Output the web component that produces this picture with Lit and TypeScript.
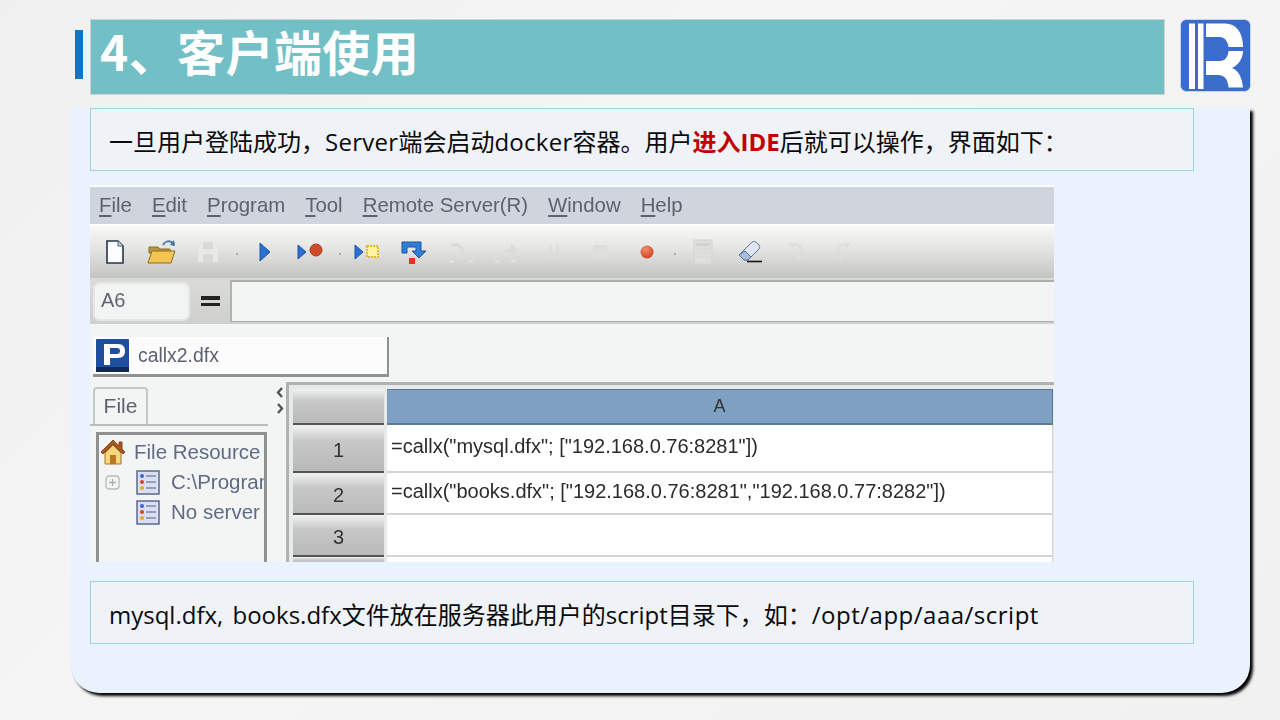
import { LitElement, html, css, svg } from "lit";
import { customElement } from "lit/decorators.js";

const icons = {
  doc: svg`<svg width="24" height="26" viewBox="0 0 24 26"><path d="M4 2h11l5 5v17H4z" fill="#fdfdfd" stroke="#26344a" stroke-width="1.6"/><path d="M15 2v5h5" fill="#cfd6e2" stroke="#4b5a70"/></svg>`,
  open: svg`<svg width="30" height="26" viewBox="0 0 30 26"><path d="M2 8h9l2 2h10v4H2z" fill="#b89740" stroke="#8a6d20"/><path d="M1 24l4-12h23l-4 12z" fill="#f4c552" stroke="#8a6d20"/><path d="M16 6c2-4 6-5 10-2" fill="none" stroke="#4f7ea8" stroke-width="2"/><path d="M27 1l1 6-5-1z" fill="#3c6f9e"/></svg>`,
  save: svg`<svg width="24" height="26" viewBox="0 0 24 26"><path d="M2 3h20v20H2z" fill="#e8e9e7"/><path d="M7 3h10v7H7zM7 15h10v8H7z" fill="#d8d9d7"/></svg>`,
  play: svg`<svg width="14" height="22" viewBox="0 0 14 22"><path d="M2 2l10 9-10 9z" fill="#2d6fd0" stroke="#1f56a8"/></svg>`,
  playRec: svg`<svg width="28" height="18" viewBox="0 0 28 18"><path d="M1 2l8 7-8 7z" fill="#2d6fd0" stroke="#1f56a8"/><circle cx="19" cy="7" r="6" fill="#cf4a2c" stroke="#a8391f"/></svg>`,
  playStar: svg`<svg width="28" height="18" viewBox="0 0 28 18"><path d="M1 2l8 7-8 7z" fill="#2d6fd0" stroke="#1f56a8"/><rect x="13" y="3" width="11" height="11" fill="#fff2a0" stroke="#e3bb2a" stroke-dasharray="2 1" stroke-width="2"/></svg>`,
  step: svg`<svg width="28" height="26" viewBox="0 0 28 26"><path d="M2 3h19v9h5l-7 7-7-7h4V8H7v6H2z" fill="#2f7fd6" stroke="#1d5597"/><rect x="9" y="19" width="6" height="6" fill="#e8301c"/></svg>`,
  stepOff: svg`<svg width="26" height="24" viewBox="0 0 26 24"><path d="M3 3h8l5 6v6h4l-5 5-5-5h3v-5l-4-3H3z" fill="#dcdcda"/><rect x="1" y="20" width="5" height="3" fill="#dfdfdd"/><rect x="20" y="20" width="5" height="3" fill="#dfdfdd"/></svg>`,
  stepOff2: svg`<svg width="26" height="24" viewBox="0 0 26 24"><path d="M8 18c0-7 4-10 9-10V3l7 7-7 7v-5c-3 0-6 2-9 6z" fill="#dcdcda"/><rect x="1" y="20" width="5" height="3" fill="#dfdfdd"/><rect x="17" y="20" width="5" height="3" fill="#dfdfdd"/></svg>`,
  pause: svg`<svg width="14" height="18" viewBox="0 0 14 18"><rect x="2" y="2" width="3" height="14" fill="#dddedc"/><rect x="9" y="2" width="3" height="14" fill="#dddedc"/></svg>`,
  stop: svg`<svg width="18" height="18" viewBox="0 0 18 18"><rect x="2" y="2" width="14" height="14" fill="#dededc"/></svg>`,
  rec: svg`<svg width="16" height="16" viewBox="0 0 16 16"><defs><radialGradient id="rg" cx=".4" cy=".3" r=".8"><stop offset="0" stop-color="#f0906a"/><stop offset="1" stop-color="#c9391a"/></radialGradient></defs><circle cx="8" cy="8" r="6.5" fill="url(#rg)"/></svg>`,
  calc: svg`<svg width="22" height="26" viewBox="0 0 22 26"><rect x="2" y="1" width="18" height="24" fill="#dfe0de" stroke="#d2d3d1"/><rect x="4" y="4" width="14" height="3" fill="#d2d3d1"/><path d="M4 10h14M4 14h14M4 18h14" stroke="#d6d7d5"/></svg>`,
  eraser: svg`<svg width="26" height="24" viewBox="0 0 26 24"><path d="M2 15L14 3c2-2 4-2 6 0l2 2c1 2 1 3-1 5L11 20H7z" fill="#dfe6f2" stroke="#5c7197"/><path d="M2 15l5 5h4l3-3-6-6z" fill="#a9bcdb" stroke="#5c7197"/><path d="M10 21.500h15" stroke="#111" stroke-width="1.600"/></svg>`,
  undo: svg`<svg width="22" height="22" viewBox="0 0 22 22"><path d="M7 4c7-2 12 3 9 10l-4 5" fill="none" stroke="#dededc" stroke-width="2.500"/><path d="M3 2h5v6z" fill="#dededc"/></svg>`,
  redo: svg`<svg width="22" height="22" viewBox="0 0 22 22"><path d="M15 4C8 2 3 7 6 14l4 5" fill="none" stroke="#dededc" stroke-width="2.500"/><path d="M19 2h-5v6z" fill="#dededc"/></svg>`,
  home: svg`<svg width="26" height="26" viewBox="0 0 26 26"><path d="M1 13L13 1l6 6V3h3v7l3 3-2 2L13 5 3 15z" fill="#b0561a" stroke="#6d3510" stroke-width=".8"/><path d="M5 14l8-8 8 8v11H5z" fill="#f6d77e" stroke="#a4722a"/><rect x="10" y="16" width="6" height="9" fill="#b9781f"/></svg>`,
  list: svg`<svg width="24" height="25" viewBox="0 0 24 25"><rect x="1" y="1" width="22" height="23" fill="#d9dff0" stroke="#5b688e" stroke-width="1.500"/><circle cx="6" cy="6" r="2" fill="#3a63d6"/><circle cx="6" cy="12" r="2" fill="#d9402b"/><circle cx="6" cy="18" r="2" fill="#e3ad21"/><path d="M10 6h10M10 12h10M10 18h10" stroke="#7d8bab" stroke-width="1.500"/></svg>`,
  plus: svg`<svg width="15" height="15" viewBox="0 0 15 15"><rect x="1" y="1" width="13" height="13" rx="3" fill="none" stroke="#b5b9b8" stroke-width="1.300"/><path d="M4 7.500h7M7.500 4v7" stroke="#a9adac" stroke-width="1.300"/></svg>`,
  p: svg`<svg width="33" height="33" viewBox="0 0 33 33"><rect width="33" height="33" rx="1" fill="#1d4f9c"/><rect y="28" width="33" height="5" fill="#0e2a57"/><path d="M8 5h14c5 0 7 3 7 7s-2 7-7 7H14v7H8zM14 9v6h7c2 0 3-1 3-3s-1-3-3-3z" fill="#fff" fill-rule="evenodd"/></svg>`,
  left: svg`<svg width="8" height="11" viewBox="0 0 8 11"><path d="M6 1L2 5.500 6 10" fill="none" stroke="#555" stroke-width="2.400"/></svg>`,
  right: svg`<svg width="8" height="11" viewBox="0 0 8 11"><path d="M2 1l4 4.500L2 10" fill="none" stroke="#555" stroke-width="2.400"/></svg>`,
  logo: svg`<svg width="71" height="73" viewBox="0 0 71 73"><rect x=".5" y=".5" width="70" height="72" rx="6" fill="#3a6ccb" stroke="#c9d4e8"/><rect x="9" y="4.500" width="6" height="65.500" fill="#fff"/><rect x="18" y="4.500" width="5.500" height="65.500" fill="#fff"/><path d="M26 4.500H45C56 4.500 63 13 63 28H48.500C48 22 44 18 40 18H26Z" fill="#fff"/><path d="M63 32C63 40 58 46 52 49C58 51 62 58 63 68.500H48.500C48 60 44 56 38 56H26V42H40C45 42 48 38 48.500 32Z" fill="#fff"/></svg>`,
};

type Item = { i?: keyof typeof icons; dot?: boolean };
const tools: Item[] = [
  { i: "doc" }, { i: "open" }, { i: "save" }, { dot: true }, { i: "play" }, { i: "playRec" }, { dot: true },
  { i: "playStar" }, { i: "step" }, { i: "stepOff" }, { i: "stepOff2" }, { i: "pause" }, { i: "stop" }, { i: "rec" },
  { dot: true }, { i: "calc" }, { i: "eraser" }, { i: "undo" }, { i: "redo" },
];
const menus: [string, string][] = [["F", "ile"], ["E", "dit"], ["P", "rogram"], ["T", "ool"], ["R", "emote Server(R)"], ["W", "indow"], ["H", "elp"]];
const rows = [
  ["1", '=callx("mysql.dfx"; ["192.168.0.76:8281"])'],
  ["2", '=callx("books.dfx"; ["192.168.0.76:8281","192.168.0.77:8282"])'],
  ["3", ""],
  ["", ""],
];

@customElement("app-root")
export class AppRoot extends LitElement {
  static styles = css`
    :host { display: block; width: 1280px; height: 720px; overflow: hidden; background: linear-gradient(135deg, #f0f0f0, #f5f5f5 40%, #f1f1f1); font-family: "Open Sans", "Noto Sans CJK SC", sans-serif; color: #0a0a0a; }
    svg { flex: none; }
    .head { display: flex; align-items: flex-start; padding: 19px 0 0 75px; height: 108px; box-sizing: border-box; }
    .mark { width: 8px; height: 49px; margin-top: 11px; background: #0577cf; flex: none; }
    .title { margin-left: 7px; width: 1075px; height: 76px; box-sizing: border-box; border: 1px solid #d2d2d2; background: #72bfc5; color: #fff; font: 700 48px/60px "Noto Sans CJK SC", sans-serif; padding-left: 9px; letter-spacing: .4px; }
    .logo { margin-left: 15px; line-height: 0; }
    .panel { margin-left: 71px; width: 1179px; height: 585px; box-sizing: border-box; padding-left: 19px; background: #eaf2fd; border-radius: 0 0 28px 28px; box-shadow: 3px 3px 3px #000; }
    .box { width: 1104px; height: 63px; box-sizing: border-box; border: 1px solid #9dd5da; background: #eff2f7; font-size: 24px; line-height: 65px; padding-left: 18px; white-space: nowrap; word-spacing: 3px; }
    .box b { color: #c00000; font-weight: 700; }
    .wide { letter-spacing: .28px; }
    .wider { letter-spacing: .5px; }
    .shot { width: 964px; height: 377px; margin: 14px 0 19px; overflow: hidden; background: #f3f5f4; font-family: "Liberation Sans", sans-serif; color: #5b6270; filter: blur(.45px); border-top: 2px solid #fff; box-sizing: border-box; }
    .menu { height: 37px; background: #d0d4dd; display: flex; align-items: center; padding-left: 9px; gap: 20px; font-size: 20.400px; border-bottom: 2px solid #fff; box-sizing: content-box; }
    .menu u { text-underline-offset: 3px; }
    .tools { height: 52px; background: linear-gradient(#f8f8f7, #e6e7e5 40%, #c4c5c1); display: flex; align-items: center; padding-left: 2px; }
    .slot { width: 46.500px; display: flex; justify-content: center; align-items: center; }
    .dot { width: 10px; display: flex; justify-content: center; }
    .dot::after { content: ""; width: 2px; height: 2px; background: #aaa; margin-top: 4px; }
    .formula { height: 46px; background: linear-gradient(#dbdcd9, #cfd0cd); display: flex; align-items: center; padding-left: 3px; box-sizing: border-box; }
    .ref { width: 97px; height: 39px; box-sizing: border-box; border: 2px solid #e6e8e8; border-radius: 7px; background: #f2f4f3; font-size: 20px; line-height: 33px; padding-left: 6px; color: #5f6570; }
    .eq { width: 40px; display: flex; flex-direction: column; align-items: center; gap: 3px; }
    .eq i { width: 19px; height: 3.500px; background: #222; }
    .input { flex: 1; height: 42px; background: #f2f4f3; border-left: 2px solid #aeb2b0; border-top: 2px solid #a9aeac; border-bottom: 1px solid #a9aeac; box-sizing: border-box; }
    .tabrow { height: 58px; padding: 13px 0 0 3px; box-sizing: border-box; }
    .sheet { width: 296px; height: 40px; box-sizing: border-box; background: #fcfcfc; border-right: 2px solid #8e9290; border-bottom: 3px solid #8e9290; display: flex; align-items: center; padding-left: 3px; gap: 9px; font-size: 19.400px; }
    .main { display: flex; height: 180px; }
    .side { width: 188px; padding: 5px 0 0 3px; box-sizing: border-box; flex: none; }
    .tab { width: 55px; height: 37px; box-sizing: border-box; border: 2px solid #c3c8c8; border-bottom: none; border-radius: 4px 4px 0 0; font-size: 21px; line-height: 33px; text-align: center; }
    .tabline { height: 2px; background: #b9bfbf; width: 178px; margin-left: -3px; }
    .tree { margin: 6px 0 0 3px; width: 171px; height: 140px; box-sizing: border-box; border: solid #8d9291; border-width: 3px 3px 0 3px; overflow: hidden; font-size: 20.500px; white-space: nowrap; padding: 1px 0 0 1px; color: #5f6a85; }
    .node { display: flex; align-items: center; height: 30px; gap: 8px; }
    .node.top { height: 31px; }
    .sub { padding-left: 36px; gap: 11px; }
    .sub.plus { padding-left: 5px; }
    .sub.plus svg:first-child { margin-right: 5px; }
    .split { width: 12px; flex: none; padding-top: 5px; margin-left: -4px; display: flex; flex-direction: column; align-items: center; gap: 5px; }
    .gridwrap { flex: 1; border: solid #aeb3b2; border-width: 3px 0 0 3px; padding: 4px 0 0 4px; background: #e8eaea; min-width: 0; }
    .grid { display: grid; grid-template-columns: 91px 1fr; grid-template-rows: 36px 48px 42px 42px 10px; column-gap: 3px; }
    .corner, .rh { background: linear-gradient(#f2f2f2, #c8c8c8 35%, #b9b9b9); border-bottom: 2px solid #555; color: #333; font-size: 20px; display: flex; align-items: center; justify-content: center; box-sizing: border-box; }
    .rh { padding-top: 5px; }
    .ch { background: #7da0c3; border: solid #5a7a99; border-width: 1px 1px 2px 0; color: #333; font-size: 18px; text-align: center; line-height: 33px; box-sizing: border-box; margin-right: 1px; }
    .cell { background: #fff; border-bottom: 2px solid #d4d4d4; border-right: 1px solid #d4d4d4; font-size: 20px; color: #2b2b2b; line-height: 42px; padding-left: 4px; white-space: nowrap; overflow: hidden; box-sizing: border-box; margin-right: 1px; }
    .cell.two { line-height: 37px; }
  `;

  render() {
    return html`
      <div class="head">
        <div class="mark"></div>
        <div class="title">4、客户端使用</div>
        <div class="logo">${icons.logo}</div>
      </div>
      <div class="panel">
        <div class="box">一旦用户登陆成功，<span class="wide">Server</span>端会启动<span class="wide">docker</span>容器。用户<b>进入IDE</b>后就可以操作，界面如下：</div>
        <div class="shot">
          <div class="menu">${menus.map(([a, b]) => html`<span><u>${a}</u>${b}</span>`)}</div>
          <div class="tools">${tools.map((t) => (t.dot ? html`<span class="dot"></span>` : html`<span class="slot">${icons[t.i!]}</span>`))}</div>
          <div class="formula">
            <div class="ref">A6</div>
            <div class="eq"><i></i><i></i></div>
            <div class="input"></div>
          </div>
          <div class="tabrow"><div class="sheet">${icons.p}<span>callx2.dfx</span></div></div>
          <div class="main">
            <div class="side">
              <div class="tab">File</div>
              <div class="tabline"></div>
              <div class="tree">
                <div class="node top">${icons.home}<span>File Resource</span></div>
                <div class="node sub plus">${icons.plus}${icons.list}<span>C:\\Program</span></div>
                <div class="node sub">${icons.list}<span>No server</span></div>
              </div>
            </div>
            <div class="split">${icons.left}${icons.right}</div>
            <div class="gridwrap">
              <div class="grid">
                <div class="corner"></div>
                <div class="ch">A</div>
                ${rows.map(
                  ([n, f], idx) => html`<div class="rh">${n}</div><div class="cell ${idx === 1 ? "two" : ""}">${f}</div>`
                )}
              </div>
            </div>
          </div>
        </div>
        <div class="box">mysql.dfx, books.dfx文件放在服务器此用户的script目录下，如：<span class="wider">/opt/app/aaa/script</span></div>
      </div>
    `;
  }
}
